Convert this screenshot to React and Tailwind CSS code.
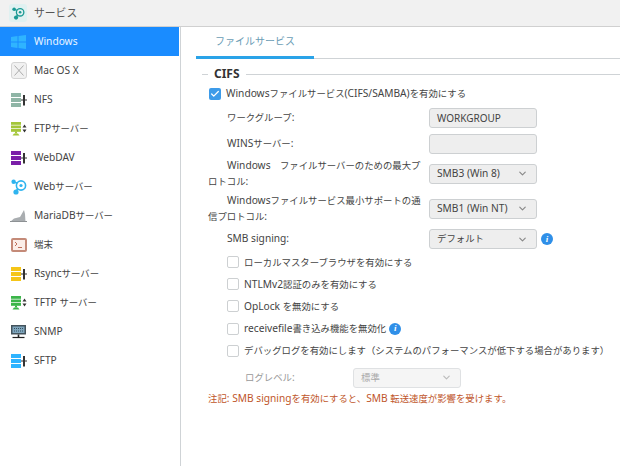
import React from 'react';
import { ChevronDown, Check } from 'lucide-react';

const FONT = 'font-["Noto_Sans","Noto_Sans_CJK_JP",sans-serif]';

// latin runs sit a little larger than the japanese ones in the original font
const Mixed = ({ text }) =>
    text.split(/([\x20-\x7e]+)/).filter(Boolean).map((part, i) => (
        <span key={i} className={/^[\x20-\x7e]+$/.test(part) ? 'text-[10.2px]' : 'text-[9.4px]'}>{part}</span>
    ));

// the stack-with-connector icon used by NFS, WebDAV, Rsync and SFTP
const StackIcon = ({ color }) => (
    <svg width="16" height="14" viewBox="0 0 16 14">
        <rect x="0" y="0" width="10" height="4" fill={color} />
        <rect x="0" y="5" width="10" height="4" fill={color} />
        <rect x="0" y="10" width="10" height="4" fill={color} />
        <path d="M10 7h6" stroke="#333" strokeWidth="1" />
        <path d="M13 2v10.5" stroke="#333" strokeWidth="2" />
    </svg>
);

// monitor on a stand with up/down arrows, FTP and TFTP
const TransferIcon = ({ color }) => (
    <svg width="16" height="14" viewBox="0 0 16 14">
        <rect x="0" y="0" width="10" height="2.8" fill={color} />
        <rect x="0" y="3.5" width="10" height="2.8" fill={color} />
        <rect x="0" y="7" width="10" height="2.8" fill={color} />
        <path d="M5 9.5v2" stroke={color} strokeWidth="2" />
        <path d="M1.5 13.5h7l-1.5-2h-4z" fill={color} />
        <path d="M11.5 5.5l2-3 2 3zM11.5 7.5l2 3 2-3z" fill="#333" />
    </svg>
);

const NodeIcon = ({ color, size = 16 }) => (
    <svg width={size} height={size} viewBox="0 0 16 16" fill="none">
        <circle cx="10" cy="6.5" r="4.6" stroke={color} strokeWidth="1.6" />
        <circle cx="10" cy="6.5" r="1.6" fill={color} />
        <circle cx="2.6" cy="2.8" r="2.2" fill={color} />
        <circle cx="5" cy="13" r="2.6" fill={color} />
        <path d="M3 3.2l3.4.8M5.2 12l1.6-2.4" stroke={color} strokeWidth="1.4" />
    </svg>
);

const WindowsIcon = () => (
    <svg width="15" height="14" viewBox="0 0 15 14">
        <path d="M0 2l6.5-1v5.6H0zM7.5.9L15 0v6.6H7.5zM0 7.5h6.5V13L0 12zM7.5 7.5H15V14l-7.5-1z" fill="#2fb4ff" />
    </svg>
);

const MacIcon = () => (
    <svg width="16" height="17" viewBox="0 0 16 17" fill="none">
        <rect x="0.5" y="0.5" width="15" height="16" rx="2.5" fill="#f1f1f1" stroke="#d4d4d4" />
        <path d="M3.5 3.5l9 10M12.5 3.5l-9 10" stroke="#9a9a9a" strokeWidth="0.8" />
    </svg>
);

const MariaIcon = () => (
    <svg width="17" height="12" viewBox="0 0 17 12">
        <path d="M0 12l4-3.5 6-1.5 4-7 1 4 .5 8z" fill="#a9adb0" />
        <path d="M0 12h17v-1H0z" fill="#8d9194" />
    </svg>
);

const TerminalIcon = () => (
    <svg width="16" height="14" viewBox="0 0 16 14" fill="none">
        <rect x="1" y="1" width="14" height="12" rx="1" fill="#fbeee8" stroke="#c48a78" strokeWidth="2" />
        <path d="M4 4l2 2-2 2" stroke="#b5604a" strokeWidth="0.9" />
        <path d="M7 9.5h4" stroke="#b5604a" strokeWidth="0.9" />
    </svg>
);

const SnmpIcon = () => (
    <svg width="15" height="14" viewBox="0 0 15 14">
        <rect x="0" y="0" width="15" height="9.5" fill="#44535c" />
        <rect x="1.5" y="1.5" width="12" height="6.5" fill="#7fa6bd" />
        <path d="M3 3.5h9M3 6h9" stroke="#2f4656" strokeWidth="0.9" strokeDasharray="1 1" />
        <path d="M7.5 9.5v2.5" stroke="#222" strokeWidth="1.6" />
        <path d="M1.5 12.5h12" stroke="#222" strokeWidth="1.2" />
    </svg>
);

const InfoIcon = () => (
    <span className="flex h-3 w-3 items-center justify-center rounded-full bg-[#2f8fe8] font-['Liberation_Serif',serif] text-[9px] font-bold italic leading-none text-white">
        i
    </span>
);

const services = [
    { name: 'Windows', icon: <WindowsIcon />, active: true },
    { name: 'Mac OS X', icon: <MacIcon /> },
    { name: 'NFS', icon: <StackIcon color="#8fb5a6" /> },
    { name: 'FTPサーバー', icon: <TransferIcon color="#a4c639" /> },
    { name: 'WebDAV', icon: <StackIcon color="#7a1fa8" /> },
    { name: 'Webサーバー', icon: <NodeIcon color="#2fb4ef" /> },
    { name: 'MariaDBサーバー', icon: <MariaIcon /> },
    { name: '端末', icon: <TerminalIcon /> },
    { name: 'Rsyncサーバー', icon: <StackIcon color="#f5c518" /> },
    { name: 'TFTP サーバー', icon: <TransferIcon color="#3cb54a" /> },
    { name: 'SNMP', icon: <SnmpIcon /> },
    { name: 'SFTP', icon: <StackIcon color="#2fb4ff" /> },
];

const Sidebar = () => (
    <aside className="w-[181px] shrink-0 border-r border-[#cfd3d6] bg-white">
        {services.map((s) => (
            <div
                key={s.name}
                className={`mr-px flex h-[29px] items-center ${s.active ? 'bg-[#1a8cff] text-[#eaf5ff]' : 'text-[#444]'}`}
            >
                <span className="flex w-[34px] shrink-0 justify-center pl-[3px]">{s.icon}</span>
                <span><Mixed text={s.name} /></span>
            </div>
        ))}
    </aside>
);

const TextBox = ({ value }) => (
    <div className="flex h-[20px] w-[108px] items-center rounded-[3px] border border-[#cdd0d2] bg-[#eeeeee] px-[7px] text-[10px] text-[#444]">
        {value}
    </div>
);

const Select = ({ value, disabled }) => (
    <div className={`flex h-[20px] w-[108px] items-center justify-between rounded-[3px] border pl-[7px] pr-[8px] ${disabled ? 'border-[#dfe1e3] bg-[#f5f5f5] text-[#aaa]' : 'border-[#cdd0d2] bg-[#eeeeee] text-[#444]'}`}>
        <span><Mixed text={value} /></span>
        <ChevronDown size={11} strokeWidth={2.5} className={disabled ? 'text-[#bbb]' : 'text-[#888]'} />
    </div>
);

const FormRow = ({ label, className = '', children }) => (
    <div className={`flex items-center ${className}`}>
        <div className="w-[221px] shrink-0 pr-[6px] indent-[19px] leading-[15.5px] text-[#444]"><Mixed text={label} /></div>
        {children}
    </div>
);

const CheckRow = ({ label, info }) => (
    <div className="flex h-[22.2px] items-center gap-[5px] pl-[19px] text-[#444]">
        <span className="h-[12px] w-[12px] shrink-0 rounded-[2px] border border-[#cdd0d2] bg-white" />
        <span className="whitespace-nowrap"><Mixed text={label} /></span>
        {info && <span className="-ml-[2px]"><InfoIcon /></span>}
    </div>
);

export default function App() {
    return (
        <div className={`flex h-[466px] w-[620px] flex-col overflow-hidden bg-white text-[10px] ${FONT}`}>
            <header className="flex h-[27px] shrink-0 items-center gap-[7px] border-b border-[#d0d0d0] bg-[#f1f1f1] pl-[9px]">
                <span className="flex h-[18px] w-[18px] items-center justify-center rounded-[3px] bg-[#e0f1f1]">
                    <NodeIcon color="#1a9a94" size={13} />
                </span>
                <span className="text-[10.8px] text-[#555]">サービス</span>
            </header>
            <div className="flex min-h-0 flex-1">
                <Sidebar />
                <main className="min-w-0 flex-1">
                    <div className="ml-[15px] flex h-[32px] border-b border-[#cfd3d6]">
                        <div className="flex h-[32px] w-[118px] items-center justify-center border-b-[3px] border-[#2aa3e8] text-[10px] text-[#6a9cb5]">
                            ファイルサービス
                        </div>
                    </div>
                    <div className="mt-[7px] flex items-center gap-[6px] pl-[21px]">
                        <span className="h-px w-[6px] bg-[#cfd3d6]" />
                        <span className="text-[12px] font-bold leading-[16px] text-[#333]">CIFS</span>
                        <span className="h-px flex-1 bg-[#cfd3d6]" />
                    </div>
                    <div className="pl-[27px]">
                        <div className="mt-[4px] flex h-[16px] items-center gap-[5px] pl-px text-[#444]">
                            <span className="flex h-[12px] w-[12px] items-center justify-center rounded-[2px] bg-[#3d9be9]">
                                <Check size={10} strokeWidth={3} className="text-white" />
                            </span>
                            <span><Mixed text="Windowsファイルサービス(CIFS/SAMBA)を有効にする" /></span>
                        </div>
                        <FormRow label="ワークグループ:" className="mt-[6px]"><TextBox value="WORKGROUP" /></FormRow>
                        <FormRow label="WINSサーバー:" className="mt-[6px]"><TextBox value="" /></FormRow>
                        <FormRow label="Windows　ファイルサーバーのための最大プロトコル:" className="mt-[4px]"><Select value="SMB3 (Win 8)" /></FormRow>
                        <FormRow label="Windowsファイルサービス最小サポートの通信プロトコル:" className="mt-[4px]"><Select value="SMB1 (Win NT)" /></FormRow>
                        <FormRow label="SMB signing:" className="mt-[5px]">
                            <Select value="デフォルト" />
                            <span className="ml-[4px]"><InfoIcon /></span>
                        </FormRow>
                        <div className="mt-[2px]">
                            <CheckRow label="ローカルマスターブラウザを有効にする" />
                            <CheckRow label="NTLMv2認証のみを有効にする" />
                            <CheckRow label="OpLock を無効にする" />
                            <CheckRow label="receivefile書き込み機能を無効化" info />
                            <CheckRow label="デバッグログを有効にします（システムのパフォーマンスが低下する場合があります）" />
                        </div>
                        <div className="mt-[6px] flex items-center pl-[37px] text-[#999]">
                            <span className="w-[108px]"><Mixed text="ログレベル:" /></span>
                            <Select value="標準" disabled />
                        </div>
                        <p className="mt-[3px] leading-[15px] text-[#c0562a]">
                            <Mixed text="注記: SMB signingを有効にすると、SMB 転送速度が影響を受けます。" />
                        </p>
                    </div>
                </main>
            </div>
        </div>
    );
}
